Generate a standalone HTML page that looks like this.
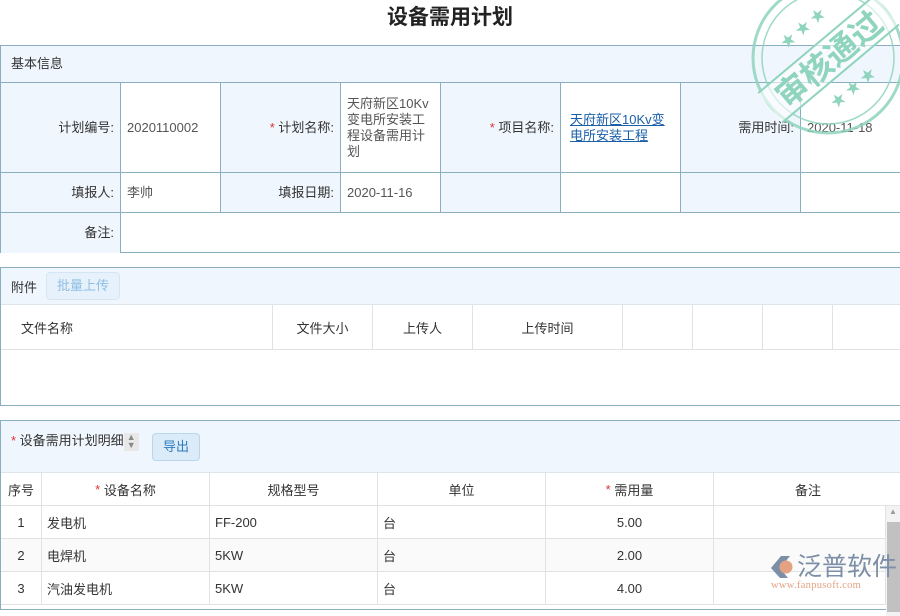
<!DOCTYPE html>
<html><head><meta charset="utf-8"><style>
*{margin:0;padding:0;box-sizing:border-box}
body{width:900px;height:600px;overflow:hidden;background:#fff;font-family:"Liberation Sans","Noto Sans CJK SC",sans-serif;font-size:13px;color:#333;position:relative}
.abs{position:absolute}
.title{position:absolute;top:1px;left:0;width:900px;text-align:center;font-size:21px;font-weight:bold;color:#222}
.box{position:absolute;left:0;width:901px;border:1px solid #8aaebf}
.c{position:absolute;border-right:1px solid #8aaebf;border-bottom:1px solid #8aaebf;display:flex;align-items:center;padding:0 6px;line-height:16px}
.l{background:#eff6fd;justify-content:flex-end}
.r{color:#d33}
.g{position:absolute;border-right:1px solid #e2e2e2;border-bottom:1px solid #e2e2e2;display:flex;align-items:center;justify-content:center}
a{color:#1a5fa8;text-decoration:underline}
</style></head><body>
<div class="title">设备需用计划</div>

<div class="box" style="top:45px;height:208px">
 <div class="c l" style="left:0;top:0;width:900px;height:37px;justify-content:flex-start;padding-left:10px">基本信息</div>
 <div class="c l" style="left:0;top:37px;width:120px;height:90px">计划编号:</div>
 <div class="c" style="left:120px;top:37px;width:100px;height:90px;color:#555">2020110002</div>
 <div class="c l" style="left:220px;top:37px;width:120px;height:90px"><span class="r">*</span>&nbsp;计划名称:</div>
 <div class="c" style="left:340px;top:37px;width:100px;height:90px;color:#555">天府新区10Kv变电所安装工程设备需用计划</div>
 <div class="c l" style="left:440px;top:37px;width:120px;height:90px"><span class="r">*</span>&nbsp;项目名称:</div>
 <div class="c" style="left:560px;top:37px;width:120px;height:90px;padding-left:9px"><a>天府新区10Kv变电所安装工程</a></div>
 <div class="c l" style="left:680px;top:37px;width:120px;height:90px">需用时间:</div>
 <div class="c" style="left:800px;top:37px;width:100px;height:90px;color:#555">2020-11-18</div>
 <div class="c l" style="left:0;top:127px;width:120px;height:40px">填报人:</div>
 <div class="c" style="left:120px;top:127px;width:100px;height:40px;color:#555">李帅</div>
 <div class="c l" style="left:220px;top:127px;width:120px;height:40px">填报日期:</div>
 <div class="c" style="left:340px;top:127px;width:100px;height:40px;color:#555">2020-11-16</div>
 <div class="c l" style="left:440px;top:127px;width:120px;height:40px"></div>
 <div class="c" style="left:560px;top:127px;width:120px;height:40px"></div>
 <div class="c l" style="left:680px;top:127px;width:120px;height:40px"></div>
 <div class="c" style="left:800px;top:127px;width:100px;height:40px"></div>
 <div class="c l" style="left:0;top:167px;width:120px;height:40px;border-bottom:none">备注:</div>
</div>

<div class="box" style="top:267px;height:139px">
 <div class="abs" style="left:0;top:0;width:900px;height:37px;background:#eff6fd;border-bottom:1px solid #dde4ea"></div>
 <div class="abs" style="left:10px;top:9px">附件</div>
 <div class="abs" style="left:45px;top:4px;width:74px;height:28px;border:1px solid #d5e6f3;border-radius:4px;background:#e6f1fb;color:#8ebfe3;text-align:center;line-height:26px">批量上传</div>
 <div class="g" style="left:0;top:37px;width:272px;height:45px;justify-content:flex-start;padding-left:20px">文件名称</div>
 <div class="g" style="left:272px;top:37px;width:100px;height:45px">文件大小</div>
 <div class="g" style="left:372px;top:37px;width:100px;height:45px">上传人</div>
 <div class="g" style="left:472px;top:37px;width:150px;height:45px">上传时间</div>
 <div class="g" style="left:622px;top:37px;width:70px;height:45px"></div>
 <div class="g" style="left:692px;top:37px;width:70px;height:45px"></div>
 <div class="g" style="left:762px;top:37px;width:70px;height:45px"></div>
 <div class="g" style="left:832px;top:37px;width:70px;height:45px;border-right:none"></div>
</div>

<div class="box" style="top:420px;height:190px">
 <div class="abs" style="left:0;top:0;width:900px;height:52px;background:#eff6fd;border-bottom:1px solid #dde4ea"></div>
 <div class="abs" style="left:10px;top:9px"><span class="r">*</span> 设备需用计划明细<span style="display:inline-block;width:15px;height:18px;background:#e8e8e8;color:#888;font-size:9px;line-height:8px;text-align:center;vertical-align:middle">▲<br>▼</span></div>
 <div class="abs" style="left:151px;top:12px;width:48px;height:28px;border:1px solid #b9d6ec;border-radius:4px;background:#dcebf8;color:#2d7cc0;text-align:center;line-height:26px">导出</div>
 <div class="g" style="left:0;top:52px;width:41px;height:33px">序号</div>
 <div class="g" style="left:41px;top:52px;width:168px;height:33px"><span class="r">*</span>&nbsp;设备名称</div>
 <div class="g" style="left:209px;top:52px;width:168px;height:33px">规格型号</div>
 <div class="g" style="left:377px;top:52px;width:168px;height:33px">单位</div>
 <div class="g" style="left:545px;top:52px;width:168px;height:33px"><span class="r">*</span>&nbsp;需用量</div>
 <div class="g" style="left:713px;top:52px;width:188px;height:33px;border-right:none">备注</div>

 <div class="g" style="left:0;top:85px;width:41px;height:33px">1</div>
 <div class="g" style="left:41px;top:85px;width:168px;height:33px;justify-content:flex-start;padding-left:5px">发电机</div>
 <div class="g" style="left:209px;top:85px;width:168px;height:33px;justify-content:flex-start;padding-left:5px">FF-200</div>
 <div class="g" style="left:377px;top:85px;width:168px;height:33px;justify-content:flex-start;padding-left:5px">台</div>
 <div class="g" style="left:545px;top:85px;width:168px;height:33px">5.00</div>
 <div class="g" style="left:713px;top:85px;width:172px;height:33px"></div>

 <div class="abs" style="left:0;top:118px;width:885px;height:33px;background:#fafafa"></div>
 <div class="g" style="left:0;top:118px;width:41px;height:33px">2</div>
 <div class="g" style="left:41px;top:118px;width:168px;height:33px;justify-content:flex-start;padding-left:5px">电焊机</div>
 <div class="g" style="left:209px;top:118px;width:168px;height:33px;justify-content:flex-start;padding-left:5px">5KW</div>
 <div class="g" style="left:377px;top:118px;width:168px;height:33px;justify-content:flex-start;padding-left:5px">台</div>
 <div class="g" style="left:545px;top:118px;width:168px;height:33px">2.00</div>
 <div class="g" style="left:713px;top:118px;width:172px;height:33px"></div>

 <div class="g" style="left:0;top:151px;width:41px;height:33px">3</div>
 <div class="g" style="left:41px;top:151px;width:168px;height:33px;justify-content:flex-start;padding-left:5px">汽油发电机</div>
 <div class="g" style="left:209px;top:151px;width:168px;height:33px;justify-content:flex-start;padding-left:5px">5KW</div>
 <div class="g" style="left:377px;top:151px;width:168px;height:33px;justify-content:flex-start;padding-left:5px">台</div>
 <div class="g" style="left:545px;top:151px;width:168px;height:33px">4.00</div>
 <div class="g" style="left:713px;top:151px;width:172px;height:33px"></div>
 <div class="abs" style="left:885px;top:85px;width:15px;height:110px;background:#f3f3f3"></div>
 <div class="abs" style="left:888px;top:86px;font-size:8px;color:#999">▲</div>
 <div class="abs" style="left:886px;top:101px;width:13px;height:90px;background:#c1c1c1"></div>
</div>

<svg class="abs" style="left:748px;top:-20px" width="160" height="160" viewBox="0 0 160 160">
 <g fill="none" stroke="#8fd4bd" opacity="0.85">
  <circle cx="80" cy="78" r="75" stroke-width="3"/>
  <circle cx="80" cy="78" r="66" stroke-width="1.5"/>
 </g>
 <g transform="rotate(-40 80 78)">
  <rect x="4" y="60" width="152" height="38" fill="#fff" opacity="0.6"/>
  <line x1="4" y1="60" x2="156" y2="60" stroke="#8fd4bd" stroke-width="2"/>
  <line x1="4" y1="98" x2="156" y2="98" stroke="#8fd4bd" stroke-width="2"/>
  <text x="80" y="91" text-anchor="middle" font-size="32" font-weight="bold" fill="#8fd4bd" font-family="Noto Sans CJK SC,sans-serif">审核通过</text>
  <text x="80" y="44" text-anchor="middle" font-size="15" fill="#8fd4bd">★ ★ ★</text>
  <text x="80" y="122" text-anchor="middle" font-size="15" fill="#8fd4bd">★ ★ ★</text>
 </g>
</svg>

<div class="abs" style="left:769px;top:554px;width:26px;height:26px">
 <svg width="26" height="26"><path d="M2 14 L12 2 L21 2 L11 14 L19 24 L11 24 Z" fill="#7d8fa6"/><circle cx="17" cy="13" r="6.5" fill="#e3a383"/></svg>
</div>
<div class="abs" style="left:797px;top:549px;font-size:25px;color:#7d8fa6;letter-spacing:0px;font-family:'Noto Sans CJK SC',sans-serif;line-height:32px">泛普软件</div>
<div class="abs" style="left:771px;top:580px;font-size:10.5px;color:#e3a383;font-family:'Liberation Serif',serif;letter-spacing:0.3px">www.fanpusoft.com</div>
</body></html>
